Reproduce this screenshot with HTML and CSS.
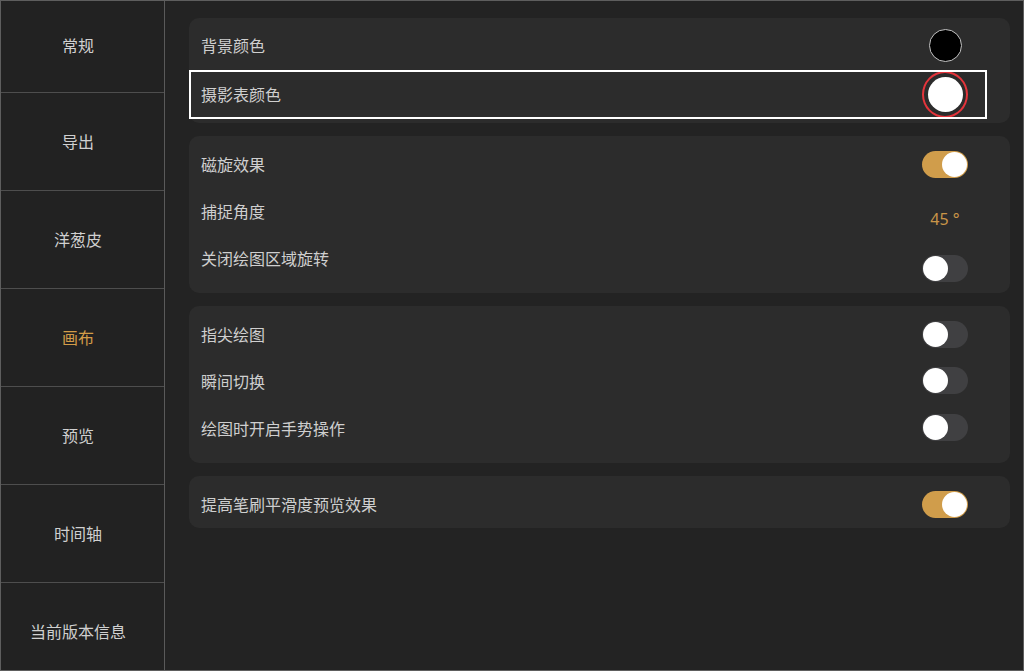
FILE: index.html
```html
<html lang="zh-CN">
<head>
    <meta charset="UTF-8">
    <meta name="viewport" content="width=device-width, initial-scale=1.0">
    <title>设置 - 画布</title>
    <link rel="stylesheet" href="styles.css">
</head>
<body>

    <div class="app">
        <!-- left menu -->
        <div class="sidebar">
            <div class="nav-item">常规</div>
            <div class="nav-item">导出</div>
            <div class="nav-item">洋葱皮</div>
            <div class="nav-item active">画布</div>
            <div class="nav-item">预览</div>
            <div class="nav-item">时间轴</div>
            <div class="nav-item">当前版本信息</div>
        </div>

        <div class="main">
            <div class="card card-colors">
                <div class="row row-tall">
                    <span class="label">背景颜色</span>
                    <span class="ctrl"><span class="swatch swatch-black"></span></span>
                </div>
                <div class="row row-tall row-marked">
                    <span class="label">摄影表颜色</span>
                    <span class="ctrl"><span class="ring"><span class="swatch swatch-white"></span></span></span>
                </div>
            </div>

            <div class="card">
                <div class="row">
                    <span class="label">磁旋效果</span>
                    <span class="ctrl"><span class="toggle on"><span class="knob"></span></span></span>
                </div>
                <div class="row">
                    <span class="label">捕捉角度</span>
                    <span class="ctrl ctrl-low"><span class="value">45 °</span></span>
                </div>
                <div class="row">
                    <span class="label">关闭绘图区域旋转</span>
                    <span class="ctrl ctrl-lower"><span class="toggle"><span class="knob"></span></span></span>
                </div>
            </div>

            <div class="card">
                <div class="row">
                    <span class="label">指尖绘图</span>
                    <span class="ctrl"><span class="toggle"><span class="knob"></span></span></span>
                </div>
                <div class="row">
                    <span class="label">瞬间切换</span>
                    <span class="ctrl ctrl-up"><span class="toggle"><span class="knob"></span></span></span>
                </div>
                <div class="row">
                    <span class="label">绘图时开启手势操作</span>
                    <span class="ctrl ctrl-up"><span class="toggle"><span class="knob"></span></span></span>
                </div>
            </div>

            <div class="card card-single">
                <div class="row">
                    <span class="label">提高笔刷平滑度预览效果</span>
                    <span class="ctrl"><span class="toggle on"><span class="knob"></span></span></span>
                </div>
            </div>
        </div>
    </div>

</body>
</html>
```

FILE: styles.css
```css
body {
    margin: 0;
    background-color: #232323;
    font-family: "Noto Sans CJK SC", "Noto Sans", sans-serif;
    color: #cfcfcf;
}
.app {
    display: flex;
    width: 1024px;
    height: 671px;
    box-sizing: border-box;
    border: 1px solid #5e5e5e;
    background-color: #232323;
}
.sidebar {
    width: 164px;
    box-sizing: border-box;
    border-right: 1px solid #5a5a5a;
    background-color: #222222;
    display: flex;
    flex-direction: column;
    overflow: hidden;
}
.nav-item {
    height: 98px;
    flex-shrink: 0;
    box-sizing: border-box;
    border-bottom: 1px solid #4e4e4e;
    display: flex;
    align-items: center;
    justify-content: center;
    padding: 0 9px 2px 0;
    font-size: 16px;
    color: #d0d0d0;
}
.nav-item:first-child {
    height: 92px;
    padding-bottom: 4px;
}
.nav-item:last-child {
    border-bottom: none;
}
.nav-item.active {
    color: #d39c48;
}
.main {
    flex: 1;
    padding: 17px 13px 0 24px;
    display: flex;
    flex-direction: column;
    gap: 13px;
}
.card {
    background-color: #2c2c2c;
    border-radius: 10px;
    padding: 5px 0 11px;
}
.card-colors {
    padding: 3px 0 4px;
}
.card-single {
    padding: 5px 0 0;
}
.row {
    height: 47px;
    display: flex;
    align-items: center;
    justify-content: space-between;
    padding: 0 42px 0 12px;
}
.row-tall {
    height: 49px;
}
.row-marked {
    margin-right: 23px;
    padding-right: 19px;
    outline: 2px solid #ffffff;
    outline-offset: -2px;
}
.label {
    font-size: 16px;
    color: #cfcfcf;
    margin-bottom: 1px;
}
.ctrl {
    width: 46px;
    display: flex;
    justify-content: center;
}
.ctrl-low {
    margin-top: 15px;
}
.ctrl-lower {
    margin-top: 20px;
}
.ctrl-up {
    margin-top: -3px;
}
.value {
    font-family: "Noto Sans", sans-serif;
    font-size: 16px;
    color: #c99548;
}
.swatch {
    display: block;
    border-radius: 50%;
}
.swatch-black {
    width: 31px;
    height: 31px;
    background-color: #000000;
    border: 1px solid #c4c4c4;
}
.swatch-white {
    width: 35px;
    height: 35px;
    background-color: #ffffff;
}
.ring {
    width: 43px;
    height: 43px;
    border: 2px solid #e4343b;
    border-radius: 50%;
    display: flex;
    align-items: center;
    justify-content: center;
}
.toggle {
    width: 46px;
    height: 27px;
    box-sizing: border-box;
    padding: 1px;
    border-radius: 14px;
    background-color: #404042;
    display: flex;
    justify-content: flex-start;
}
.toggle.on {
    background-color: #d09d4b;
    justify-content: flex-end;
}
.knob {
    width: 25px;
    height: 25px;
    border-radius: 50%;
    background-color: #ffffff;
}
```
